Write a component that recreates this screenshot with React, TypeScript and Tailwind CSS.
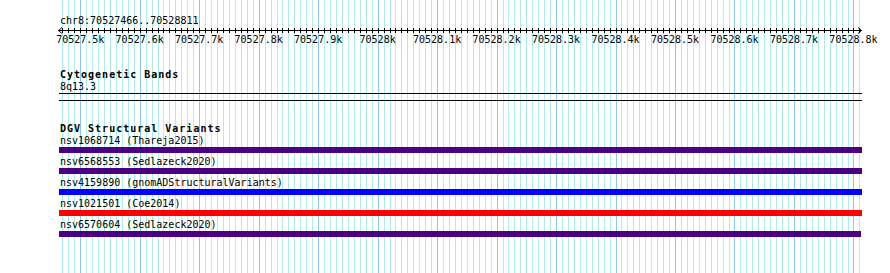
const START = 70527466
const END = 70528811
const X0 = 60
const W = 800

const xOf = (bp: number) => X0 + ((bp - START) / (END - START)) * W
const px = (x: number) => Math.round(x) + 0.5

const minor: number[] = []
for (let bp = Math.ceil(START / 10) * 10; bp <= END; bp += 10) minor.push(bp)
const major = minor.filter((bp) => bp % 100 === 0)

const kLabel = (bp: number) =>
  bp % 1000 === 0 ? `${bp / 1000}k` : `${Math.floor(bp / 1000)}.${(bp % 1000) / 100}k`

const variants = [
  { id: "nsv1068714", study: "Thareja2015", color: "bg-[#4b0082]", w: "w-[803px]" },
  { id: "nsv6568553", study: "Sedlazeck2020", color: "bg-[#4b0082]", w: "w-[803px]" },
  { id: "nsv4159890", study: "gnomADStructuralVariants", color: "bg-[#0000ff]", w: "w-[803px]" },
  { id: "nsv1021501", study: "Coe2014", color: "bg-[#ff0000]", w: "w-[803px]" },
  { id: "nsv6570604", study: "Sedlazeck2020", color: "bg-[#4b0082]", w: "w-[802px]" },
]

function GridLines() {
  return (
    <svg className="absolute inset-0 pointer-events-none" width={890} height={273}>
      {minor.map((bp) => (
        <line
          key={bp}
          x1={px(xOf(bp))}
          x2={px(xOf(bp))}
          y1={0}
          y2={273}
          stroke={bp % 100 === 0 ? "#8cc8ec" : "#b0ecec"}
          strokeWidth={1}
        />
      ))}
    </svg>
  )
}

function Ruler() {
  return (
    <div>
      <svg className="block" width={890} height={7}>
        <line x1={58} x2={862} y1={3.5} y2={3.5} stroke="#000" strokeWidth={1} />
        <polyline points="62,0.5 58.5,3.5 62,6.5" fill="none" stroke="#000" strokeWidth={1} />
        <polyline points="858,0.5 861.5,3.5 858,6.5" fill="none" stroke="#000" strokeWidth={1} />
        {minor.map((bp) => (
          <line key={bp} x1={px(xOf(bp))} x2={px(xOf(bp))} y1={1} y2={6} stroke="#000" strokeWidth={1} />
        ))}
      </svg>
      <div className="relative h-[12px]">
        {major.map((bp) => (
          <span
            key={bp}
            className="absolute top-0 -translate-x-1/2 whitespace-nowrap"
            style={{ left: xOf(bp) }}
          >
            {kLabel(bp)}
          </span>
        ))}
      </div>
    </div>
  )
}

export default function App() {
  return (
    <div className="relative w-[890px] h-[273px] overflow-hidden bg-white text-black font-['DejaVu_Sans_Mono',monospace] text-[10px] leading-[12px]">
      <GridLines />
      <div className="relative flex flex-col">
        <div className="pt-[15px] pl-[60px]">chr8:70527466..70528811</div>
        <Ruler />

        <div className="mt-[22px] pl-[60px] font-bold tracking-[1px] leading-[13px]">Cytogenetic Bands</div>
        <div className="pl-[60px]">8q13.3</div>
        <div className="ml-[59px] w-[803px] h-[8px] border-y border-black" />

        <div className="mt-[21px] pl-[60px] font-bold tracking-[1px] leading-[13px]">DGV Structural Variants</div>
        {variants.map((v) => (
          <div key={v.id} className="flex flex-col mb-[3px]">
            <div className="pl-[60px] whitespace-pre">{`${v.id} (${v.study})`}</div>
            <div className={`ml-[59px] h-[6px] ${v.w} ${v.color}`} />
          </div>
        ))}
      </div>
    </div>
  )
}
